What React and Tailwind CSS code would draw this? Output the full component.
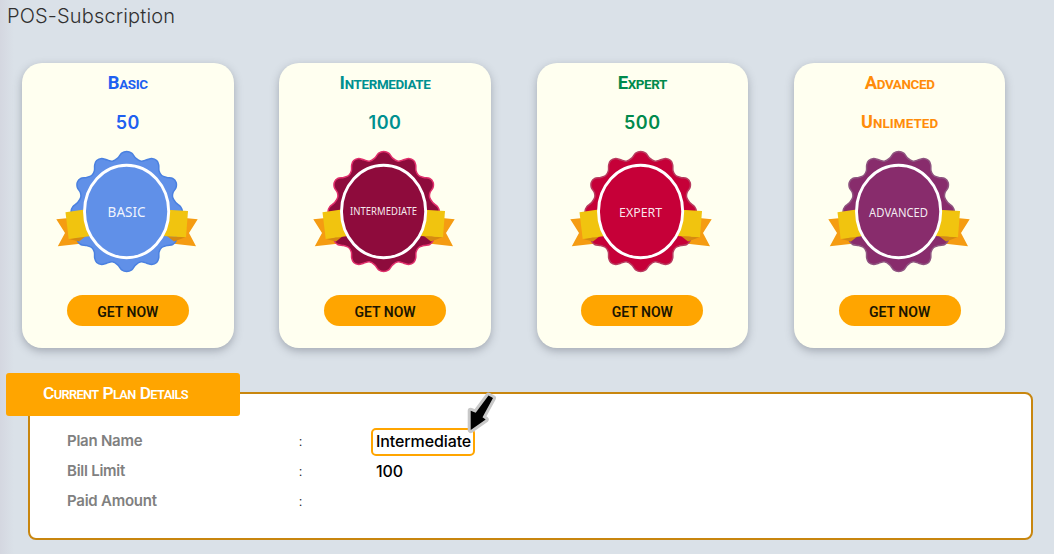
const plans = [
  { name: 'Basic', limit: '50', label: 'BASIC', tone: 'text-[#2060f0]', fill: '#6090e8', edge: '#4a80e0', size: 13.5, width: 38, y: 66.5 },
  { name: 'Intermediate', limit: '100', label: 'INTERMEDIATE', tone: 'text-[#009090]', fill: '#8e0b3c', edge: '#e0306c', size: 10.5, width: 67, y: 64.5 },
  { name: 'Expert', limit: '500', label: 'EXPERT', tone: 'text-[#008a4c]', fill: '#c60038', edge: '#b83c60', size: 12.5, width: 43, y: 67.3 },
  { name: 'Advanced', limit: 'Unlimeted', label: 'ADVANCED', tone: 'text-[#ff8c0a]', fill: '#882c6c', edge: '#8f5580', size: 12.5, width: 59, y: 67.3 },
]

const details = [
  ['Plan Name', 'Intermediate'],
  ['Bill Limit', '100'],
  ['Paid Amount', ''],
]

// One quadrant of the seal outline, as offsets from its centre (in thirds of a pixel)
const quadrant = [
  [0, 180], [15, 175], [27, 160], [43, 151], [60, 155], [75, 159], [90, 153], [96, 140], [97, 122],
  [105, 108], [120, 102], [138, 99], [148, 88], [148, 72], [139, 57], [138, 42], [147, 27], [162, 14], [167, 0],
]

const lowerRight = quadrant.slice(0, -1).reverse().map(([x, y]) => [x, -y])
const rightHalf = [...quadrant, ...lowerRight]
const leftHalf = rightHalf.slice(1, -1).reverse().map(([x, y]) => [-x, y])
const outline = [...rightHalf, ...leftHalf].map(([x, y]) => [71.7 + x / 3, 61.5 - y / 3])

function smoothPath(points) {
  const n = points.length
  let d = `M${points[0][0]} ${points[0][1]}`
  for (let i = 0; i < n; i++) {
    const a = points[(i + n - 1) % n]
    const b = points[i]
    const c = points[(i + 1) % n]
    const e = points[(i + 2) % n]
    d += `C${b[0] + (c[0] - a[0]) / 6} ${b[1] + (c[1] - a[1]) / 6} ${c[0] - (e[0] - b[0]) / 6} ${c[1] - (e[1] - b[1]) / 6} ${c[0]} ${c[1]}`
  }
  return d + 'Z'
}

const sealPath = smoothPath(outline)

function SmallCaps({ children, className }) {
  return children.split(' ').map((word) => (
    <span key={word} className={`inline-block uppercase ${className}`}>{word}</span>
  ))
}

function Badge({ plan }) {
  return (
    <svg width="144" height="123" viewBox="0 0 144 123" className="block">
      <polygon points="1.3,69.3 14,68 32,93 2.8,96.3 10,83" fill="#f59c12" />
      <polygon points="142.7,69.3 130,68 112,93 141,96.3 134,83" fill="#f59c12" />
      <path d={sealPath} fill={plan.fill} stroke={plan.edge} strokeWidth="1.5" />
      <polygon points="14,89 24,91.5 31,86" fill="#d68a10" />
      <polygon points="131,87 119,91.5 112,86" fill="#d68a10" />
      <polygon points="10.5,62.3 33,59 36,86 13.7,89" fill="#f1c40f" />
      <polygon points="108,59.5 133,61 131,87.3 108,86" fill="#f1c40f" />
      <ellipse cx="71.6" cy="61.5" rx="42.1" ry="46.2" fill={plan.fill} stroke="#fff" strokeWidth="2.9" />
      <text x="71.6" y={plan.y} textAnchor="middle" fontFamily="'Noto Sans', sans-serif" fontSize={plan.size} textLength={plan.width} lengthAdjust="spacingAndGlyphs" fill="#fff" fillOpacity="0.92">
        {plan.label}
      </text>
    </svg>
  )
}

function PlanCard({ plan }) {
  const numeric = plan.limit !== 'Unlimeted'
  return (
    <section className="flex h-[285px] flex-col items-center rounded-[20px] bg-[#fffff0] pt-[7px] shadow-[0_3px_8px_rgba(60,65,80,0.35)]">
      <h2 className={`h-[26px] leading-[26px] font-bold ${plan.tone}`}>
        <SmallCaps className="text-[13.4px] tracking-[-0.35px] first-letter:text-[18.4px]">{plan.name}</SmallCaps>
      </h2>
      <p className={`mt-[13px] h-[26px] ${plan.tone} ${numeric ? "font-['Inter'] text-[18px] leading-[28px] font-semibold tracking-[0.5px]" : 'leading-[26px] font-bold'}`}>
        {numeric ? plan.limit : <SmallCaps className="text-[13.4px] tracking-[0.1px] first-letter:text-[18px]">{plan.limit}</SmallCaps>}
      </p>
      <div className="mt-[15px] mr-[2px]">
        <Badge plan={plan} />
      </div>
      <button className="mt-[22px] h-[31px] w-[122px] rounded-full bg-[#ffa500] pt-[3px] text-[14px] font-semibold text-[#1c1600]">GET NOW</button>
    </section>
  )
}

export default function App() {
  return (
    <main className="h-[554px] w-full overflow-hidden bg-[#dae1e8] bg-[linear-gradient(90deg,#d4d7e0_0,#dae1e8_14px)] font-['Roboto',sans-serif]">
      <h1 className="h-[63px] pt-[1px] pl-[7px] font-['Inter',sans-serif] text-[20px] leading-[30px] font-[350] tracking-[0.15px] text-[#303030]">POS-Subscription</h1>
      <div className="ml-[22px] grid w-[983.4px] grid-cols-4 gap-x-[45.8px]">
        {plans.map((plan) => (
          <PlanCard key={plan.name} plan={plan} />
        ))}
      </div>
      <section className="relative mt-[44px] ml-[28px] h-[148px] w-[1005px] rounded-[8px] border-2 border-[#c8860f] bg-white pt-[33px] pl-[37px]">
        <h2 className="absolute -top-[21px] -left-[24px] flex h-[43px] w-[234px] items-baseline gap-[4px] rounded-[3px] bg-[#ffa500] pl-[37px] leading-[41px] font-semibold text-white">
          <SmallCaps className="text-[12.8px] tracking-[-0.65px] first-letter:text-[17.4px]">Current Plan Details</SmallCaps>
        </h2>
        <dl>
          {details.map(([name, value]) => (
            <div key={name} className="flex h-[30px] items-center">
              <dt className="w-[232px] pb-px font-['Inter',sans-serif] text-[15px] font-semibold tracking-[-0.25px] text-[#808080]">{name}</dt>
              <span className="w-[72px] text-[13px] text-[#202020]">:</span>
              <dd className={`flex h-[28px] items-center rounded-[5px] border-2 pr-[2px] pb-[3px] pl-[3px] font-['Inter',sans-serif] text-[16px] font-medium tracking-[-0.1px] text-black ${value === 'Intermediate' ? 'border-[#ffa500]' : 'border-transparent'}`}>{value}</dd>
            </div>
          ))}
        </dl>
        <svg className="absolute top-[-3px] left-[436px]" width="36" height="48" viewBox="0 0 36 48">
          <path d="M22.5 4.5 27 7 16.5 26.3 19.7 28.5 4.7 39 4.7 19.7 9.7 21.8Z" fill="#000" stroke="#c8c8c8" strokeWidth="6" strokeLinejoin="round" paintOrder="stroke" />
        </svg>
      </section>
    </main>
  )
}
